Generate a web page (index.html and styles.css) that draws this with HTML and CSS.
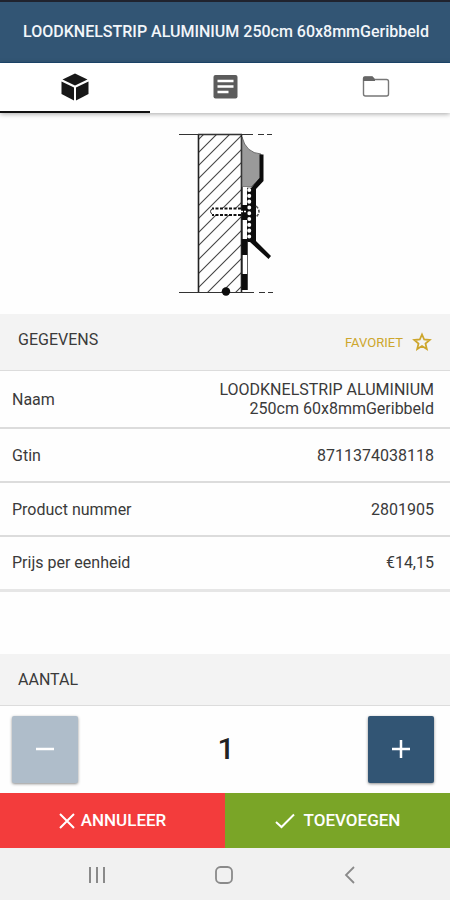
FILE: index.html
```html
<!DOCTYPE html>
<html lang="nl">
<head>
  <meta charset="UTF-8" />
  <meta name="viewport" content="width=device-width, initial-scale=1.0"/>
  <title>LOODKNELSTRIP ALUMINIUM 250cm 60x8mmGeribbeld</title>
  <link rel="stylesheet" href="styles.css">
</head>
<body>
  <header class="header">
    <h1>LOODKNELSTRIP ALUMINIUM 250cm 60x8mmGeribbeld</h1>
  </header>

  <nav class="tabs">
    <button class="tab active" aria-label="Product">
      <svg width="30" height="30" viewBox="0 0 30 30" fill="#181818">
        <path d="M15 1.500L27.500 7.500 15 13.500 2.500 7.500z"/>
        <path d="M1.500 9.500L14 15.500V28.500L1.500 22z"/>
        <path d="M28.500 9.500L16 15.500V28.500L28.500 22z"/>
      </svg>
    </button>
    <button class="tab" aria-label="Omschrijving">
      <svg width="30" height="30" viewBox="0 0 30 30">
        <rect x="3.500" y="3" width="24" height="23.500" rx="2" fill="#5c5c5c"/>
        <path d="M7.500 9H23.500M7.500 14.500H23.500M7.500 20H18.500" stroke="#fff" stroke-width="2.600"/>
      </svg>
    </button>
    <button class="tab" aria-label="Documenten">
      <svg width="30" height="30" viewBox="0 0 30 30">
        <path d="M3.500 7V6.500Q3.500 5 5 5H12L14.500 7.500H26.500Q28.500 7.500 28.500 9.500V22Q28.500 24 26.500 24H5.500Q3.500 24 3.500 22V7" fill="none" stroke="#777" stroke-width="1.400"/>
        <path d="M3 9V6.500Q3 4.500 5 4.500H12.500L15 7.500V9z" fill="#666"/>
      </svg>
    </button>
  </nav>

  <main>
    <div class="drawing">
      <svg width="110" height="180" viewBox="170 125 110 180" role="img" aria-label="Doorsnede knelstrip">
        <defs>
          <clipPath id="wall"><rect x="199" y="135" width="42" height="157"/></clipPath>
        </defs>
        <!-- hatched wall -->
        <path clip-path="url(#wall)" stroke="#444" stroke-width="1.100" d="M198 140l44-44M198 153l44-44M198 166l44-44M198 179l44-44M198 193l44-44M198 206l44-44M198 219l44-44M198 233l44-44M198 246l44-44M198 260l44-44M198 274l44-44M198 288l44-44M198 302l44-44M198 316l44-44M198 330l44-44"/>
        <path d="M198.500 134V293M241.500 134V293" stroke="#222" stroke-width="1.600"/>
        <path d="M198 134.500H242" stroke="#222" stroke-width="1.600"/>
        <path d="M179 134.500H253M258 134.500h6M267 134.500h5M179 292.500H254M259 292.500h6M268 292.500h5" stroke="#333"/>
        <!-- sealant and strip -->
        <path d="M242 137Q246 153 261 154V177L251 187H242z" fill="#9a9a9a" stroke="#555" stroke-width=".8"/>
        <path d="M259.500 154.500H263.500V181L256 189V241L271 256L268.500 259L250 242H246V188H251L259.500 178z" fill="#0c0c0c"/>
        <path d="M249.200 190V240" stroke="#fff" stroke-width="4" stroke-linecap="round" stroke-dasharray="0.100 5.700"/>
        <path d="M244.500 187V290" stroke="#fff" stroke-width="5"/>
        <path d="M242.500 187V290M247.500 241V290" stroke="#333" stroke-width=".8"/>
        <path d="M244.500 205V220M244.500 239V255M244.500 274V290" stroke="#0c0c0c" stroke-width="5.500"/>
        <!-- screw -->
        <path d="M241 208H213Q209 211.500 213 215H241z" fill="#fff"/>
        <path d="M241 208.500H212M241 215H212" stroke="#111" stroke-width="2" stroke-dasharray="3 1.500"/>
        <path d="M213 208Q208 211.500 213 215" fill="none" stroke="#222"/>
        <path d="M241 211.500H247" stroke="#fff" stroke-width="1.500" stroke-dasharray="2 1"/>
        <path d="M256 206Q262 211.500 256 217" fill="none" stroke="#555" stroke-width="1.600" stroke-dasharray="3 1.500"/>
        <circle cx="226" cy="291.500" r="4.200" fill="#0c0c0c"/>
      </svg>
    </div>

    <section>
      <div class="section-head">
        <h2>GEGEVENS</h2>
        <button class="favorite">
          FAVORIET
          <svg width="20" height="20" viewBox="0 0 20 20" fill="none" stroke="#cda62c" stroke-width="1.800">
            <path d="M10 2.500L12.200 7.500 17.700 8 13.500 11.600 14.800 17 10 14.100 5.200 17 6.500 11.600 2.300 8 7.800 7.500z"/>
          </svg>
        </button>
      </div>
      <table class="details">
        <tr><th scope="row">Naam</th><td>LOODKNELSTRIP ALUMINIUM 250cm 60x8mmGeribbeld</td></tr>
        <tr><th scope="row">Gtin</th><td>8711374038118</td></tr>
        <tr><th scope="row">Product nummer</th><td>2801905</td></tr>
        <tr><th scope="row">Prijs per eenheid</th><td>€14,15</td></tr>
      </table>
    </section>

    <section class="amount">
      <div class="section-head">
        <h2>AANTAL</h2>
      </div>
      <div class="stepper">
        <button class="step minus" aria-label="Minder">
          <svg width="20" height="20" viewBox="0 0 20 20"><path d="M1 10H19" stroke="#fff" stroke-width="2.500"/></svg>
        </button>
        <output class="count">1</output>
        <button class="step" aria-label="Meer">
          <svg width="20" height="20" viewBox="0 0 20 20"><path d="M1 10H19M10 1V19" stroke="#fff" stroke-width="2.500"/></svg>
        </button>
      </div>
    </section>
  </main>

  <div class="actions">
    <button class="cancel">
      <svg width="16" height="16" viewBox="0 0 16 16"><path d="M1 1L15 15M15 1L1 15" stroke="#fff" stroke-width="2"/></svg>
      ANNULEER
    </button>
    <button class="add">
      <svg width="20" height="16" viewBox="0 0 20 16"><path d="M1 9L6.500 14 19 1.500" fill="none" stroke="#fff" stroke-width="2"/></svg>
      TOEVOEGEN
    </button>
  </div>

  <nav class="system-bar">
    <button aria-label="Recent">
      <svg width="20" height="20" viewBox="0 0 20 20"><path d="M3 2V18M10 2V18M17 2V18" stroke="#8a8a8a" stroke-width="2"/></svg>
    </button>
    <button aria-label="Home">
      <svg width="20" height="20" viewBox="0 0 20 20"><rect x="2" y="2" width="16" height="16" rx="4.500" fill="none" stroke="#8a8a8a" stroke-width="1.800"/></svg>
    </button>
    <button aria-label="Terug">
      <svg width="20" height="20" viewBox="0 0 20 20"><path d="M14 2L6 10 14 18" fill="none" stroke="#8a8a8a" stroke-width="1.800"/></svg>
    </button>
  </nav>
</body>
</html>
```

FILE: styles.css
```css
* {
  box-sizing: border-box;
}
body {
  margin: 0;
  min-height: 100vh;
  display: flex;
  flex-direction: column;
  background: #fefefe;
  color: #3a3a3a;
  font-family: Roboto, sans-serif;
  font-size: 16px;
  line-height: 19px;
}
h1, h2 {
  margin: 0;
  font-size: 16px;
}
button {
  margin: 0;
  padding: 0;
  border: none;
  background: none;
  font: inherit;
  color: inherit;
  cursor: pointer;
}
svg {
  display: block;
}
main {
  flex: 1;
}
.header {
  padding: 20px 0 21px;
  background: #325574;
  border-top: 2px solid #20232e;
  border-bottom: 1px solid #1d4a72;
  color: #f2f6fa;
  text-align: center;
}
.header h1 {
  padding-left: 2px;
  font-weight: 500;
  white-space: nowrap;
}
.tabs {
  display: flex;
  background: #fff;
  box-shadow: 0 1px 5px rgba(0, 0, 0, 0.35);
}
.tab {
  flex: 1;
  display: flex;
  justify-content: center;
  padding: 9px 0;
  border-bottom: 2px solid transparent;
}
.tab.active {
  border-color: #111;
}
.drawing {
  display: flex;
  justify-content: center;
  padding: 12px 0 9px;
}
.section-head {
  display: flex;
  align-items: flex-start;
  justify-content: space-between;
  padding: 16px 18px;
  background: #f3f3f3;
  border-bottom: 1px solid #dcdcdc;
}
.section-head h2 {
  font-weight: 400;
}
.favorite {
  display: flex;
  align-items: center;
  gap: 9px;
  padding: 2px 0;
  font-size: 13px;
  color: #cda62c;
}
.details {
  width: 100%;
  border-collapse: collapse;
  border-bottom: 3px solid #e6e6e6;
}
.details tr {
  height: 54px;
}
.details tr + tr {
  border-top: 2px solid #dcdcdc;
}
.details th, .details td {
  padding: 9px 16px 9px 12px;
  font-weight: 400;
}
.details th {
  text-align: left;
  white-space: nowrap;
}
.details td {
  padding-left: 70px;
  text-align: right;
}
.amount {
  margin-top: 62px;
}
.stepper {
  display: flex;
  align-items: center;
  justify-content: space-between;
  padding: 10px 16px 10px 12px;
}
.step {
  display: flex;
  align-items: center;
  justify-content: center;
  width: 66px;
  height: 67px;
  border-radius: 2px;
  background: #325574;
  box-shadow: 0 1px 3px rgba(0, 0, 0, 0.45);
}
.step.minus {
  background: #afbdca;
}
.count {
  padding-left: 6px;
  font-size: 30px;
  font-weight: 500;
  line-height: 36px;
  color: #222;
}
.actions {
  display: flex;
  color: #fff;
  font-size: 17px;
  font-weight: 500;
}
.actions button {
  flex: 1;
  display: flex;
  align-items: center;
  justify-content: center;
  padding: 18px 0;
}
.cancel {
  gap: 6px;
  background: #f33c3c;
}
.add {
  gap: 9px;
  background: #7aa527;
}
.system-bar {
  display: flex;
  justify-content: space-between;
  padding: 17px 90px 15px 87px;
  background: #f1f1f1;
}
```
